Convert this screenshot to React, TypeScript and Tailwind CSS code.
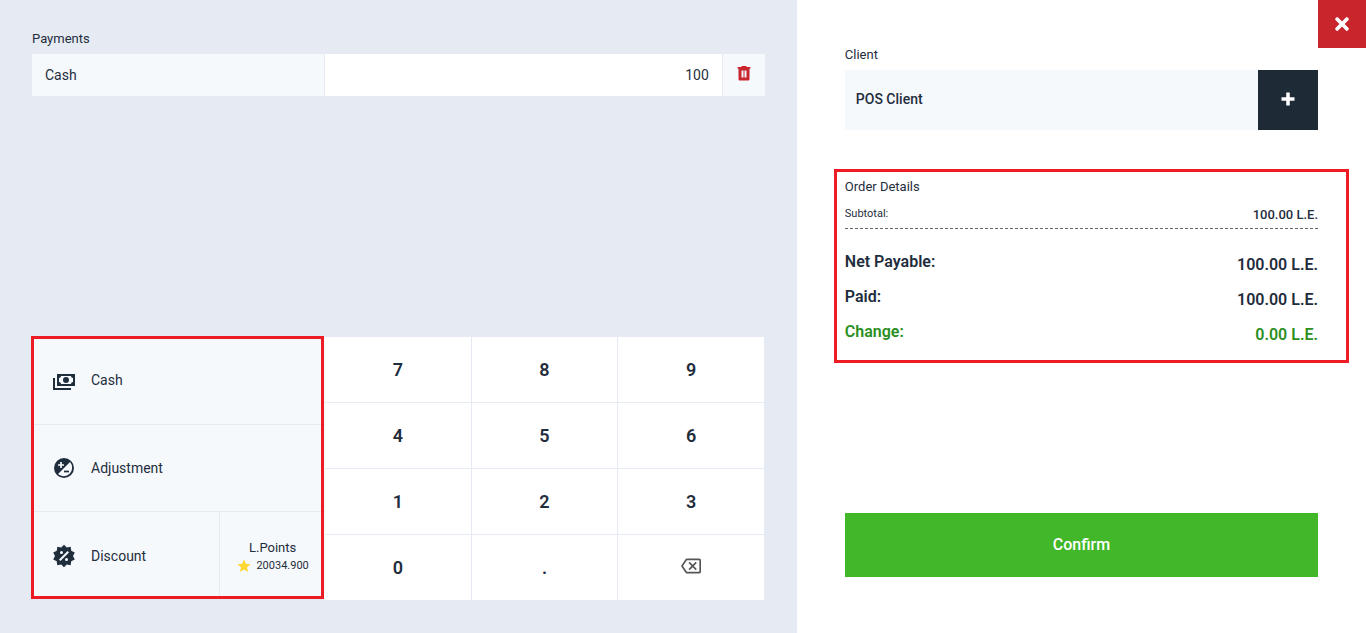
import { useState } from 'react';
import type { ReactNode } from 'react';
import { FaTimes } from 'react-icons/fa';
import { MdOutlineBackspace, MdStar } from 'react-icons/md';

interface Total {
    label: string;
    value: string;
    color: string;
}

const keys = ['7', '8', '9', '4', '5', '6', '1', '2', '3', '0', '.'];

const totals: Total[] = [
    { label: 'Net Payable:', value: '100.00 L.E.', color: 'text-[#1f2d3d]' },
    { label: 'Paid:', value: '100.00 L.E.', color: 'text-[#1f2d3d]' },
    { label: 'Change:', value: '0.00 L.E.', color: 'text-[#2b8f22]' },
];

function CashIcon() {
    return (
        <svg viewBox="0 0 24 24" className="size-6 shrink-0" fill="currentColor" aria-hidden="true">
            <path d="M5,6H23V18H5V6M14,9A3,3 0 0,1 17,12A3,3 0 0,1 14,15A3,3 0 0,1 11,12A3,3 0 0,1 14,9M9,8A2,2 0 0,1 7,10V14A2,2 0 0,1 9,16H19A2,2 0 0,1 21,14V10A2,2 0 0,1 19,8H9M1,10H3V20H19V22H1V10Z" />
        </svg>
    );
}

function AdjustmentIcon() {
    return (
        <svg viewBox="0 0 24 24" className="size-6 shrink-0" aria-hidden="true">
            <circle cx="12" cy="12" r="10" fill="currentColor" />
            <path d="M18 6A8.5 8.5 0 0 1 6 18Z" fill="#f5f9fc" />
            <path d="M6 9h6M9 6v6" stroke="#f5f9fc" strokeWidth="1.7" />
            <path d="M12 15.5h5" stroke="currentColor" strokeWidth="1.7" />
        </svg>
    );
}

function DiscountIcon() {
    return (
        <svg viewBox="0 0 24 24" className="size-6 shrink-0" fill="currentColor" aria-hidden="true">
            <path d="M18.65,2.85L19.26,6.71L22.77,8.5L21,12L22.78,15.5L19.24,17.29L18.63,21.15L14.74,20.54L11.97,23.3L9.19,20.5L5.33,21.14L4.71,17.25L1.22,15.47L3,11.97L1.23,8.5L4.74,6.69L5.35,2.86L9.22,3.5L12,0.69L14.77,3.46L18.65,2.85M9.5,7A1.5,1.5 0 0,0 8,8.5A1.5,1.5 0 0,0 9.5,10A1.5,1.5 0 0,0 11,8.5A1.5,1.5 0 0,0 9.5,7M14.5,14A1.5,1.5 0 0,0 13,15.5A1.5,1.5 0 0,0 14.5,17A1.5,1.5 0 0,0 16,15.5A1.5,1.5 0 0,0 14.5,14M8.41,17L17,8.41L15.59,7L7,15.59L8.41,17Z" />
        </svg>
    );
}

function TrashIcon() {
    return (
        <svg viewBox="0 0 14 16" className="h-4 w-3.5" fill="currentColor" aria-hidden="true">
            <path fillRule="evenodd" d="M4.5 1h5v1h4v1.5H.5V2h4ZM1.5 3.5h11v10.8a1.2 1.2 0 0 1-1.2 1.2H2.7a1.2 1.2 0 0 1-1.2-1.2ZM4.5 5.5v7h2v-7ZM7.5 5.5v7h2v-7Z" />
        </svg>
    );
}

function PlusIcon() {
    return (
        <svg viewBox="0 0 14 14" className="size-3.5" aria-hidden="true">
            <path d="M7 .5v13M.5 7h13" stroke="currentColor" strokeWidth="3.5" />
        </svg>
    );
}

function Method({ icon, label }: { icon: ReactNode; label: string }) {
    return (
        <button className="flex min-w-0 flex-1 items-center gap-[15px] pl-5 text-left text-sm">
            {icon}
            {label}
        </button>
    );
}

export default function App() {
    const [amount, setAmount] = useState('100');

    return (
        <div className="grid min-h-screen grid-cols-12 bg-white font-['Roboto','Liberation_Sans',sans-serif] text-[#1f2d3d]">
            <section className="col-span-7 flex flex-col justify-between bg-[#e6ebf3] px-8 pt-[30px] pb-[33px]">
                <div>
                    <label htmlFor="amount" className="block text-[13px] leading-[18px]">Payments</label>
                    <div className="mt-1.5 flex h-[42px] bg-[#f5f9fc] text-sm">
                        <div className="flex w-2/5 items-center border-r border-[#e6ebf3] pl-[13px]">Cash</div>
                        <input
                            id="amount"
                            value={amount}
                            onChange={(e) => setAmount(e.target.value)}
                            className="min-w-0 flex-1 bg-white px-[13px] text-right outline-none"
                        />
                        <button
                            aria-label="Remove payment"
                            className="flex w-[43px] items-center justify-center border-l border-[#e6ebf3] pb-1 text-[#c9252d]"
                        >
                            <TrashIcon />
                        </button>
                    </div>
                </div>

                <div className="flex h-[263px]">
                    <div className="relative flex w-2/5 flex-col divide-y divide-[#e6ebf3] bg-[#f5f9fc]">
                        <div className="flex flex-1">
                            <Method icon={<CashIcon />} label="Cash" />
                        </div>
                        <div className="flex flex-1">
                            <Method icon={<AdjustmentIcon />} label="Adjustment" />
                        </div>
                        <div className="flex flex-1">
                            <Method icon={<DiscountIcon />} label="Discount" />
                            <button className="flex w-[106px] flex-col items-center justify-center border-l border-[#e6ebf3]">
                                <span className="text-[13px] leading-5">L.Points</span>
                                <span className="flex items-center gap-1 text-[11px] leading-4">
                                    <MdStar className="size-4 text-[#fdd835]" />
                                    20034.900
                                </span>
                            </button>
                        </div>
                        <div className="pointer-events-none absolute -top-px -left-px right-px bottom-px border-3 border-[#ed1c24]" />
                    </div>
                    <div className="grid w-3/5 grid-cols-3 gap-px bg-[#e6ebf3] pr-px">
                        {keys.map((key) => (
                            <button
                                key={key}
                                onClick={() => setAmount(amount + key)}
                                className="bg-white text-lg font-semibold"
                            >
                                {key}
                            </button>
                        ))}
                        <button
                            aria-label="Backspace"
                            onClick={() => setAmount(amount.slice(0, -1))}
                            className="flex items-center justify-center bg-white pb-1 text-[#555]"
                        >
                            <MdOutlineBackspace className="size-5" />
                        </button>
                    </div>
                </div>
            </section>

            <section className="relative col-span-5 flex flex-col px-12 pt-[46px] pb-14">
                <button
                    aria-label="Close"
                    className="absolute top-0 right-0 flex size-12 items-center justify-center bg-[#c9252d] text-white"
                >
                    <FaTimes className="size-5" />
                </button>

                <h2 className="text-[13px] leading-[18px]">Client</h2>
                <div className="mt-1.5 flex h-[60px] bg-[#f5f9fc]">
                    <div className="flex flex-1 items-center pb-0.5 pl-[11px] text-sm font-medium">POS Client</div>
                    <button
                        aria-label="Add client"
                        className="flex w-[60px] items-center justify-center bg-[#1e2b37] pb-0.5 text-white"
                    >
                        <PlusIcon />
                    </button>
                </div>

                <div className="mt-[39px] -mr-[31px] -ml-[11px] border-3 border-[#ed1c24] pt-1.5 pr-7 pb-2.5 pl-2">
                    <h2 className="text-[13px] leading-[18px]">Order Details</h2>
                    <dl>
                        <div className="mb-4 flex h-[33px] items-center justify-between border-b border-dashed border-[#666]">
                            <dt className="pt-1 text-[11px]">Subtotal:</dt>
                            <dd className="pt-1.5 text-[13px] font-medium">100.00 L.E.</dd>
                        </div>
                        {totals.map((total) => (
                            <div key={total.label} className={`flex justify-between text-base font-semibold ${total.color}`}>
                                <dt className="pt-[5px] pb-1.5">{total.label}</dt>
                                <dd className="pt-2">{total.value}</dd>
                            </div>
                        ))}
                    </dl>
                </div>

                <button className="mt-auto h-16 bg-[#43b72a] text-base font-medium text-white">Confirm</button>
            </section>
        </div>
    );
}
